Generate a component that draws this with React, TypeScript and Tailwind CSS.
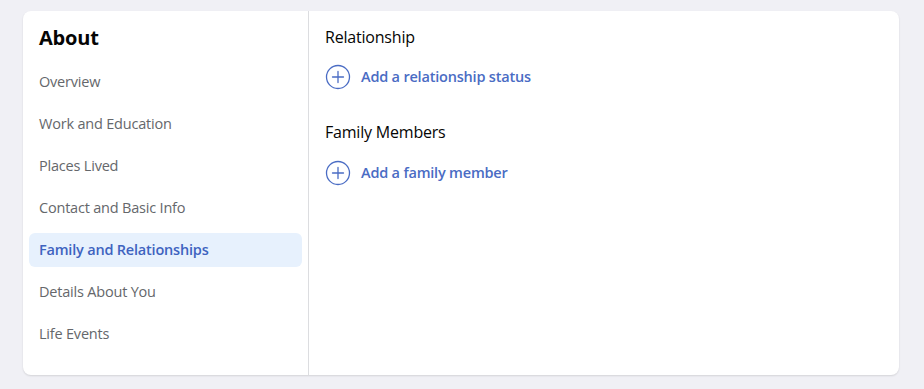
import React from "react";

const items = [
  "Overview",
  "Work and Education",
  "Places Lived",
  "Contact and Basic Info",
  "Family and Relationships",
  "Details About You",
  "Life Events",
];

function PlusCircle() {
  return (
    <svg width="26" height="26" viewBox="0 0 26 26" fill="none" className="shrink-0">
      <circle cx="13" cy="13" r="11.5" stroke="#4a6cc4" strokeWidth="1.3" />
      <path d="M13 7.5v11M7.5 13h11" stroke="#4a6cc4" strokeWidth="1.3" strokeLinecap="round" />
    </svg>
  );
}

export default function App() {
  return (
    <div
      className="w-[924px] h-[389px] bg-[#f0f0f5] pt-[11px] pl-[23px]"
      style={{ fontFamily: '"Open Sans", "Noto Sans", sans-serif' }}
    >
      <div className="w-[876px] h-[364px] bg-white rounded-lg shadow-[0_1px_2px_rgba(0,0,0,0.12)] flex">
        <div className="w-[286px] border-r border-[#dcdde0] pl-[6px] pr-[6px] pt-[13px]">
          <div className="pl-[10px] text-[20px] font-bold text-[#050505] leading-[28px] tracking-[-0.2px]">About</div>
          <div className="mt-[13px] flex flex-col gap-2">
            {items.map((it) => {
              const active = it === "Family and Relationships";
              return (
                <div
                  key={it}
                  className={
                    active
                      ? "h-[34px] flex items-center pl-[10px] rounded-md bg-[#e7f1fd] text-[#3e63c0] text-[14.5px] font-semibold tracking-[-0.2px]"
                      : "h-[34px] flex items-center pl-[10px] rounded-md text-[#65676b] text-[14.5px] font-medium tracking-[-0.2px]"
                  }
                >
                  {it}
                </div>
              );
            })}
          </div>
        </div>
        <div className="flex-1 pl-[16px] pt-[15px]">
          <div className="text-[16px] text-[#050505] font-medium leading-[22px] tracking-[-0.2px]">Relationship</div>
          <div className="mt-[16px] h-[26px] flex items-center gap-[10px]">
            <PlusCircle />
            <span className="text-[14.5px] font-semibold text-[#4a6cc4] tracking-[-0.2px]">Add a relationship status</span>
          </div>
          <div className="mt-[31px] text-[16px] text-[#050505] font-medium leading-[22px] tracking-[-0.2px]">Family Members</div>
          <div className="mt-[17px] h-[26px] flex items-center gap-[10px]">
            <PlusCircle />
            <span className="text-[14.5px] font-semibold text-[#4a6cc4] tracking-[-0.2px]">Add a family member</span>
          </div>
        </div>
      </div>
    </div>
  );
}
